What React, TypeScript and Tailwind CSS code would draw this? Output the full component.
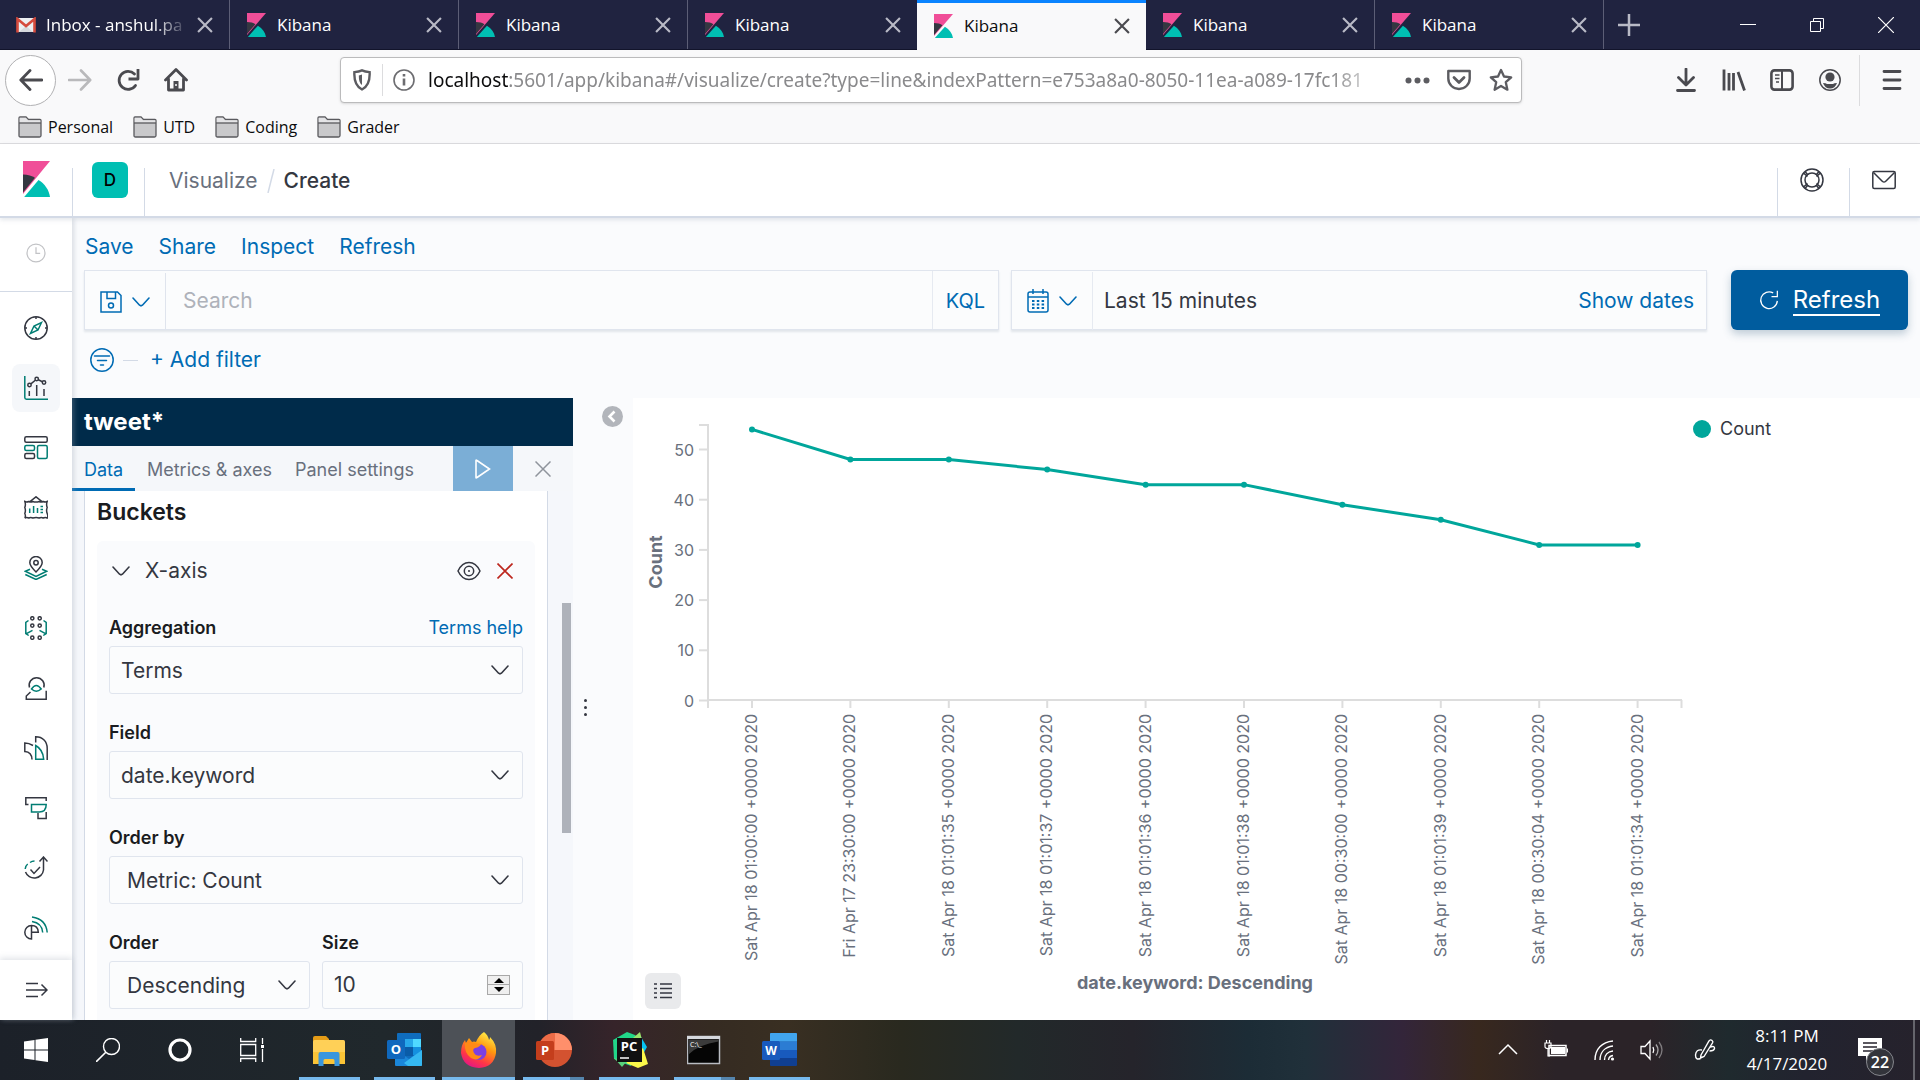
import React from "react";

type IconProps = { children: React.ReactNode; size?: string; box?: string; className?: string };

function Icon({ children, size = "size-6", box = "0 0 24 24", className = "" }: IconProps) {
  return (
    <svg
      viewBox={box}
      className={`${size} ${className} shrink-0`}
      fill="none"
      stroke="currentColor"
      strokeWidth="1.5"
      aria-hidden="true"
    >
      {children}
    </svg>
  );
}

const TEAL = "#017d73";

function KibanaMark({ className }: { className: string }) {
  return (
    <svg viewBox="0 0 27 36" className={`${className} shrink-0`} preserveAspectRatio="none" aria-hidden="true">
      <path d="M0 0h27L0 33z" fill="#f04e98" />
      <path d="M0 13.500c4.800 0 9.200 1.300 12 3.200L0 31.500z" fill="#343741" />
      <path d="M15.500 19C22 23 26 29 27 36H1.200z" fill="#00bfb3" />
    </svg>
  );
}

function GmailMark() {
  return (
    <svg viewBox="0 0 20 16" className="h-4 w-5 shrink-0" aria-hidden="true">
      <path d="M1 1h18v14H1z" fill="#eceff1" />
      <path d="M3 15l7-6 7 6z" fill="#d5d8dc" />
      <path d="M1.500 15.500V2L10 9l8.500-7v13.500" fill="none" stroke="#d54b3d" strokeWidth="2.600" />
    </svg>
  );
}

function CloseX({ className = "" }: { className?: string }) {
  return (
    <svg viewBox="0 0 15 15" className={`size-4 ${className}`} stroke="currentColor" strokeWidth="2" aria-hidden="true">
      <path d="M1 1l13 13M14 1L1 14" />
    </svg>
  );
}

function Chevron({ className = "" }: { className?: string }) {
  return (
    <svg viewBox="0 0 18 10" className={`h-[10px] w-[18px] ${className}`} fill="none" stroke="currentColor" strokeWidth="1.600" strokeLinecap="round" strokeLinejoin="round" aria-hidden="true">
      <path d="M1 1l6.600 7.200q1.400 1.200 2.800 0L17 1" />
    </svg>
  );
}

function BrowserTabs() {
  const tabs = ["Kibana", "Kibana", "Kibana", "Kibana", "Kibana", "Kibana"];
  return (
    <div className="flex h-[50px] shrink-0 border-b border-[#12142b] bg-[#202340] text-[17px] text-white">
      <div className="flex h-[49px] min-w-0 max-w-[230px] flex-1 items-center border-r border-[#5c5e76] pl-4 pr-4 pt-px">
        <GmailMark />
        <button className="ml-[10px] min-w-0 flex-1 overflow-hidden whitespace-nowrap text-left [mask-image:linear-gradient(to_right,black_75%,transparent)]">
          Inbox - anshul.pa
        </button>
        <button aria-label="Close tab" className="ml-2 text-[#b9bac6]">
          <CloseX />
        </button>
      </div>
      {tabs.map((t, i) => {
        const active = i === 3;
        return (
          <div
            key={i}
            className={
              active
                ? "flex h-[50px] min-w-0 max-w-[229px] flex-1 items-center border-t-[3px] border-[#0a84ff] bg-[#f9f9fa] pb-[2px] pl-[17px] pr-4 text-[#0c0c0d]"
                : i === 2
                  ? "flex h-[49px] min-w-0 max-w-[229px] flex-1 items-center pl-[17px] pr-4 pt-px"
                  : "flex h-[49px] min-w-0 max-w-[229px] flex-1 items-center border-r border-[#5c5e76] pl-[17px] pr-4 pt-px"
            }
          >
            <KibanaMark className="h-6 w-[19px]" />
            <button className="ml-[11px] min-w-0 flex-1 truncate text-left">{t}</button>
            <button aria-label="Close tab" className={active ? "text-[#4a4a4f]" : "text-[#b9bac6]"}>
              <CloseX />
            </button>
          </div>
        );
      })}
      <button aria-label="New tab" className="ml-[14px] flex items-center text-[#b9bac6]">
        <svg viewBox="0 0 22 22" className="size-[22px]" stroke="currentColor" strokeWidth="2.500" aria-hidden="true">
          <path d="M11 0v22M0 11h22" />
        </svg>
      </button>
      <div className="ml-auto flex items-center gap-[53px] pr-[26px]">
        <button aria-label="Minimize">
          <svg viewBox="0 0 16 16" className="size-4" stroke="white" aria-hidden="true"><path d="M0 7.500h16" /></svg>
        </button>
        <button aria-label="Restore">
          <svg viewBox="0 0 16 16" className="size-4" stroke="white" fill="none" aria-hidden="true"><path d="M1.500 4.500h10v10h-10zM4.500 4.500v-3h10v10h-3" /></svg>
        </button>
        <button aria-label="Close window">
          <svg viewBox="0 0 16 16" className="size-4" stroke="white" strokeWidth="1.200" aria-hidden="true"><path d="M0 0l16 16M16 0L0 16" /></svg>
        </button>
      </div>
    </div>
  );
}

function BrowserNav() {
  return (
    <div className="flex h-[60px] shrink-0 items-center pl-[5px] pr-4 text-[#4a4a4f]">
      <button aria-label="Back" className="flex size-[51px] items-center justify-center rounded-full border border-[#b1b1b3] bg-white">
        <Icon><path d="M23 12H2M11 2.500L1.800 12l9.200 9.500" strokeWidth="2.800" strokeLinecap="round" strokeLinejoin="round" /></Icon>
      </button>
      <button aria-label="Forward" className="ml-3 text-[#b9b9bb]">
        <Icon><path d="M1 12h21M13 2.500l9.200 9.500-9.200 9.500" strokeWidth="2.600" strokeLinecap="round" strokeLinejoin="round" /></Icon>
      </button>
      <button aria-label="Reload" className="ml-6">
        <Icon>
          <path d="M19.500 17.500A9 9 0 1 1 18.500 6" strokeWidth="2.800" strokeLinecap="round" />
          <path d="M22 1v10H12.500" strokeWidth="2.800" strokeLinejoin="round" />
        </Icon>
      </button>
      <button aria-label="Home" className="ml-6">
        <Icon>
          <path d="M1.500 12L12 1.500 22.500 12M4.500 11v11h15V11" strokeWidth="2.800" strokeLinecap="round" strokeLinejoin="round" />
          <path d="M9.500 13h5v9h-5z" fill="currentColor" stroke="none" />
          <path d="M12 16v2" stroke="#fff" strokeWidth="1.500" />
        </Icon>
      </button>
      <div className="ml-[152px] flex h-[46px] min-w-0 max-w-[1182px] flex-1 items-center rounded border border-[#bbbbbc] bg-white pl-3 pr-2 shadow-sm">
        <button aria-label="Tracking protection" className="w-[18px]">
          <svg viewBox="0 0 18 22" className="h-[22px] w-[18px]" fill="none" stroke="#5c5c61" strokeWidth="2.400" aria-hidden="true">
            <path d="M9 1.300c2.500 1.200 5 1.600 7.600 1.800C17 10 16 17 9 20.500 2 17 1 10 1.400 3.100 4 2.900 6.500 2.500 9 1.300z" />
            <path d="M9 5.500c-1.200.500-2 .700-3.200.900C5.800 11 6.500 14 9 16z" fill="#5c5c61" stroke="none" />
          </svg>
        </button>
        <div className="ml-[11px] h-8 w-px bg-[#dcdcde]" />
        <button aria-label="Site information" className="ml-[10px]">
          <svg viewBox="0 0 22 22" className="size-[22px]" fill="none" stroke="#6c6c70" strokeWidth="1.600" aria-hidden="true">
            <circle cx="11" cy="11" r="10" />
            <path d="M11 9.500v7" strokeWidth="2.600" />
            <path d="M11 5v2.500" strokeWidth="2.600" />
          </svg>
        </button>
        <div role="textbox" aria-label="Address" className="ml-[13px] min-w-0 flex-1 overflow-hidden whitespace-nowrap font-[Noto_Sans,sans-serif] text-[19px] text-[#8a8a8c] [mask-image:linear-gradient(to_right,black_94%,transparent)]">
          <span className="text-[#0c0c0d]">localhost</span>:5601/app/kibana#/visualize/create?type=line&amp;indexPattern=e753a8a0-8050-11ea-a089-17fc181
        </div>
        <button aria-label="Page actions" className="ml-4">
          <svg viewBox="0 0 25 7" className="h-[7px] w-[25px]" fill="#5c5c61" aria-hidden="true"><circle cx="3.500" cy="3.500" r="3" /><circle cx="12.500" cy="3.500" r="3" /><circle cx="21.500" cy="3.500" r="3" /></svg>
        </button>
        <button aria-label="Save to Pocket" className="ml-[17px] text-[#5c5c61]">
          <Icon>
            <path d="M1.300 3h21.400v7.500c0 6-5 10.500-10.700 10.500S1.300 16.500 1.300 10.500z" strokeWidth="2.400" strokeLinejoin="round" />
            <path d="M7 9.500l5 5 5-5" strokeWidth="2.800" strokeLinecap="round" strokeLinejoin="round" />
          </Icon>
        </button>
        <button aria-label="Bookmark this page" className="ml-[18px] text-[#5c5c61]">
          <Icon><path d="M12 2l3 6.500 7.200.800-5.400 4.900 1.600 7.500L12 18l-6.400 3.700 1.600-7.500-5.400-4.900L9 8.500z" strokeWidth="2.300" strokeLinejoin="round" /></Icon>
        </button>
      </div>
      <div className="ml-auto flex items-center gap-6">
        <button aria-label="Downloads"><Icon><path d="M12 1v15M4.500 9.500L12 17l7.500-7.500M3.500 22.500h17" strokeWidth="2.800" strokeLinecap="round" strokeLinejoin="round" /></Icon></button>
        <button aria-label="Library"><Icon><path d="M2 1.500v21M7 5v17.500M11.500 5v17.500M16 4l6.500 18.500" strokeWidth="2.800" /></Icon></button>
        <button aria-label="Sidebars">
          <Icon>
            <rect x="1.400" y="2.400" width="21.200" height="19.200" rx="3" strokeWidth="2.600" />
            <path d="M12 3v18" strokeWidth="2" /><path d="M5 7h4.500M5 10.500h4.500M6 14h3" strokeWidth="1.500" />
          </Icon>
        </button>
        <button aria-label="Account">
          <Icon>
            <circle cx="12" cy="12" r="10.200" strokeWidth="1.500" />
            <circle cx="12" cy="9" r="4.600" fill="currentColor" stroke="none" />
            <path d="M5 15q3 0 4 1h6q1-1 4-1-2 5.500-7 5.500T5 15z" fill="currentColor" stroke="none" />
          </Icon>
        </button>
      </div>
      <div className="ml-[17px] h-[51px] w-px bg-[#dcdcde]" />
      <button aria-label="Open menu" className="ml-5"><Icon><path d="M4 3.500h16M4 12h16M4 20.500h16" strokeWidth="2.800" strokeLinecap="round" /></Icon></button>
    </div>
  );
}

function Bookmarks() {
  return (
    <div className="flex h-[34px] shrink-0 items-center gap-5 border-b border-[#dcdcde] pl-[18px] text-[16px] text-[#0c0c0d]">
      {["Personal", "UTD", "Coding", "Grader"].map((b) => (
        <a key={b} href="#" className="flex items-center gap-[6px]">
          <svg viewBox="0 0 24 22" className="h-[22px] w-6" fill="#c9c9cb" stroke="#5a5a5e" strokeWidth="1.300" aria-hidden="true">
            <path d="M1 19.500V2q0-1 1-1h6l2.500 2.500H22q1 0 1 1v15q0 1.500-1.500 1.500h-19Q1 21 1 19.500z" />
            <path d="M1.700 6.800h20.600V4.200H10L7.800 1.800H1.700z" fill="#e4e4e6" stroke="none" />
            <path d="M1 7h22" />
          </svg>
          {b}
        </a>
      ))}
    </div>
  );
}

function KibanaHeader() {
  return (
    <header className="z-10 flex h-[74px] shrink-0 border-b-2 border-[#d3dae6] bg-white font-[Inter,sans-serif] text-[21px] text-[#343741] shadow-[0_2px_4px_rgba(152,162,179,0.25)]">
      <a href="#" aria-label="Kibana home" className="flex w-[72px] justify-center pt-[17px]"><KibanaMark className="h-9 w-[27px]" /></a>
      <div className="mt-6 w-px bg-[#d3dae6]" />
      <div className="flex w-[71px] pl-[19px] pt-[18px]">
        <button className="size-9 rounded-md bg-[#00bfb3] pt-px text-[17px] font-medium text-black">D</button>
      </div>
      <div className="mt-6 w-px bg-[#d3dae6]" />
      <nav aria-label="Breadcrumb" className="flex h-[74px] items-center pl-6">
        <a href="#" className="text-[#69707d]">Visualize</a>
        <svg viewBox="0 0 8 24" className="mx-[9px] h-6 w-2" stroke="#d3dae6" strokeWidth="1.500" aria-hidden="true"><path d="M7 0L1 24" /></svg>
        <span className="font-medium">Create</span>
      </nav>
      <div className="ml-auto mt-6 w-px bg-[#d3dae6]" />
      <button aria-label="Help" className="flex w-[71px] justify-center pr-1 pt-6">
        <Icon>
          <circle cx="12" cy="12" r="11" /><circle cx="12" cy="12" r="7" />
          <path d="M3.500 5l4 3.500M5 3.500L8 7M20.500 5l-4 3.500M19 3.500L16 7M3.500 19l4-3.500M5 20.500L8 17M20.500 19l-4-3.500M19 20.500L16 17" />
        </Icon>
      </button>
      <div className="mt-6 w-px bg-[#d3dae6]" />
      <button aria-label="Newsfeed" className="flex w-[70px] justify-center pr-[2px] pt-6">
        <Icon><rect x="0.800" y="3.500" width="22.400" height="17" rx="1.500" /><path d="M1.500 4.500l9 9q1.500 1.200 3 0l9-9" /></Icon>
      </button>
    </header>
  );
}

const navIcons: { name: string; draw: React.ReactNode }[] = [
  {
    name: "Discover",
    draw: (<><circle cx="12" cy="12" r="11.200" /><path d="M12 1v2M12 21v2M1 12h2M21 12h2" /><path d="M17.500 6.500l-3.500 7.500-7.500 3.500L10 10zM10 10l4 4" stroke={TEAL} /></>),
  },
  {
    name: "Visualize",
    draw: (<><path d="M.800 0v21.500q0 1.700 1.700 1.700H24" stroke={TEAL} /><circle cx="5.500" cy="9" r="1.700" /><circle cx="12.700" cy="3" r="1.700" /><circle cx="20" cy="6.500" r="1.700" /><path d="M6.900 7.900l4.400-3.700M14.300 3.800l4.100 1.900M5.300 15v5M12.700 9v11M20 13v7" /></>),
  },
  {
    name: "Dashboard",
    draw: (<><rect x=".800" y=".800" width="22.400" height="5.500" rx="1.500" /><rect x=".800" y="9.500" width="9.700" height="5" rx="1.500" stroke={TEAL} /><rect x="13.500" y="9.500" width="9.700" height="13" rx="1.500" stroke={TEAL} /><rect x=".800" y="17.500" width="9.700" height="5" rx="1.500" /></>),
  },
  {
    name: "Canvas",
    draw: (<><path d="M6 5.500l6-4.700 6 4.700M.800 5.500q2 1.200 4 0 2 1.200 4 0 3 1.200 6.400 0 2 1.200 4 0 2 1.200 4 0-1.200 3 0 6-1.200 3 0 6t0 4.500q-2-1.200-4 0-2-1.200-4 0-3-1.200-6.400 0-2-1.200-4 0-2-1.200-4 0 1.200-2 0-4.500 1.200-3 0-6 1.200-3 0-6z" /><path d="M5.700 12.500V17M9.600 10v7M13.500 12v5M16.500 10.500H19M16.500 13.500H19M16.500 16.500H19" stroke={TEAL} /></>),
  },
  {
    name: "Maps",
    draw: (<><path d="M12 16C8 12 5.800 9.500 5.800 6.500a6.200 6 0 0 1 12.400 0C18.200 9.500 16 12 12 16z" /><circle cx="12" cy="6.800" r="2.200" /><path d="M6 13.200l-4.700 2L12 20.500l10.700-5.300-4.700-2M1.300 18.500L12 23.500l10.700-5" stroke={TEAL} /></>),
  },
  {
    name: "Machine Learning",
    draw: (<><circle cx="8.300" cy="2.300" r="1.600" /><circle cx="15.700" cy="2.300" r="1.600" /><circle cx="8.300" cy="9.600" r="1.600" /><circle cx="15.700" cy="9.600" r="1.600" /><circle cx="8.300" cy="21.700" r="1.600" /><circle cx="15.700" cy="21.700" r="1.600" /><path d="M4.500 4.500L1.800 6.500v11l2.900 2M19.500 4.500l2.700 2v11l-2.900 2M2 17.800l6.500-3.500M22 17.800l-6.500-3.500" stroke={TEAL} /></>),
  },
  {
    name: "Metrics",
    draw: (<><path d="M5.500 11.500A7.500 7.500 0 1 1 19.800 11.500M6.500 16l-4.200 4v3.200h19.900v-8.500" /><path d="M7.500 13q4.700-7 9.700 0-5 4.500-9.700 0z" stroke={TEAL} /></>),
  },
  {
    name: "Logs",
    draw: (<><path d="M9 9.500Q5 7 .800 7v8.500q7 .500 7.200 8M11.700 6.500V.800c7 0 11.500 4.500 11.500 11.500V24" /><path d="M11.700 9.500q7.300 4 8 13.700h-8z" stroke={TEAL} /></>),
  },
  {
    name: "APM",
    draw: (<><path d="M4.500 8.500H1.800V1.800h20.400V5M14 17v5.500h8.200V16" /><path d="M7.500 8.500h14.700q0 7.500-7 7.500H7.500z" stroke={TEAL} /></>),
  },
  {
    name: "Uptime",
    draw: (<><path d="M1.500 16a9.300 9 0 0 0 18-2V1M15.500 5.500l4-4.500 4 4.500M6.500 13.500l3.500 4 6-6.500" /><path d="M1.200 13q.500-3.500 2.500-5M6 6.500Q8 5 10.500 5" stroke={TEAL} /></>),
  },
  {
    name: "SIEM",
    draw: (<><path d="M7.500 9.500a6.700 6.700 0 1 0 0 13.400V9.500q6.500 0 6.800 6.700H7.500" /><path d="M8 1q14 2 15.200 15.500M8 5.500q10 1.500 10.700 11" stroke={TEAL} /></>),
  },
];

function SideNav() {
  return (
    <nav aria-label="Main" className="z-[5] flex w-[72px] shrink-0 flex-col bg-white text-[#343741] shadow-[2px_0_5px_rgba(152,162,179,0.35)]">
      <button aria-label="Recently viewed" className="flex h-[74px] shrink-0 items-center justify-center border-b border-[#d3dae6] pb-[3px] pr-px text-[#c2c3c6]">
        <Icon size="size-5"><circle cx="12" cy="12" r="10.800" /><path d="M12 5v7.500h5" /></Icon>
      </button>
      <ul className="mt-3 flex min-h-0 flex-1 flex-col gap-3 overflow-hidden">
        {navIcons.map((n) => (
          <li key={n.name} className="flex justify-center">
            <a href="#" aria-label={n.name} className={n.name === "Visualize" ? "flex size-12 items-center justify-center rounded-lg bg-[#f5f7fa]" : "flex size-12 items-center justify-center"}>
              <Icon>{n.draw}</Icon>
            </a>
          </li>
        ))}
      </ul>
      <button aria-label="Expand" className="flex h-[60px] shrink-0 items-center justify-center shadow-[0_-2px_6px_rgba(152,162,179,0.3)]">
        <Icon><path d="M2 5.500h12M2 12h21M2 18.500h12M17.500 6.500L23 12l-5.500 5.500" /></Icon>
      </button>
    </nav>
  );
}

function QueryBar() {
  return (
    <div className="flex h-[60px] text-[21px]">
      <div className="flex min-w-0 flex-1 border border-[#e0e5ee] bg-[#fbfcfd] shadow-[0_2px_2px_rgba(152,162,179,0.25)]">
        <button aria-label="Saved queries" className="flex w-20 items-center justify-center gap-[10px] pt-[3px] text-[#006bb4]">
          <svg viewBox="0 0 22 22" className="size-[22px]" fill="none" stroke="currentColor" strokeWidth="1.500" aria-hidden="true">
            <path d="M1 1h16.500L21 4.500V21H1zM7 1v6.500h8.500V1" /><circle cx="11" cy="14.500" r="2.500" />
          </svg>
          <Chevron />
        </button>
        <div className="mt-[2px] w-px bg-[#dfe4ed]" />
        <input aria-label="Search" placeholder="Search" className="min-w-0 flex-1 bg-transparent pl-[17px] pr-4 pt-px outline-none placeholder:text-[#aeb2ba]" />
        <div className="w-px bg-[#e6eaf1]" />
        <button className="w-[65px] pt-px text-[20px] text-[#006bb4]">KQL</button>
      </div>
      <div className="ml-3 flex min-w-0 flex-[0_1_696px] items-center border border-[#e0e5ee] bg-[#fbfcfd] shadow-[0_2px_2px_rgba(152,162,179,0.25)]">
        <button aria-label="Quick date select" className="flex h-full w-20 items-center justify-center gap-[10px] pt-px text-[#006bb4]">
          <svg viewBox="0 0 22 24" className="h-6 w-[22px]" fill="none" stroke="currentColor" strokeWidth="1.500" aria-hidden="true">
            <rect x="1" y="3" width="20" height="20" rx="2" /><path d="M1 8h20M6 0v5M16 0v5" />
            <path d="M5 12h12.500M5 15.500h12.500M5 19h12.500" strokeWidth="2" strokeDasharray="2.500 2.300" />
          </svg>
          <Chevron />
        </button>
        <div className="mt-[2px] h-full w-px bg-[#e6eaf1]" />
        <button className="flex-1 pl-[11px] pt-px text-left">Last 15 minutes</button>
        <button className="pr-3 pt-px text-[#006bb4]">Show dates</button>
      </div>
      <button className="ml-6 flex w-[177px] items-center justify-center gap-[14px] rounded-md bg-[#005c9e] text-[24px] text-white shadow-[0_4px_8px_rgba(54,97,126,0.3)]">
        <Icon size="size-5"><path d="M22 13a10 10 0 1 1-5-9.500M22 1v7h-7" /></Icon>
        <span className="mt-px border-b-2 border-white leading-7">Refresh</span>
      </button>
    </div>
  );
}

function SelectField({ id, label, value, indent = false, help }: { id: string; label: string; value: string; indent?: boolean; help?: string }) {
  return (
    <div className="min-w-0 flex-1">
      <div className="flex h-6 items-center justify-between text-[18px]">
        <label htmlFor={id} className="font-semibold text-[#1a1c21]">{label}</label>
        {help && <a href="#" className="text-[#006bb4]">{help}</a>}
      </div>
      <div className="relative mt-[7px]">
        <select id={id} className={indent ? "h-12 w-full appearance-none rounded-[3px] border border-[#e0e5ee] bg-[#fbfcfd] pl-[17px] pt-px text-[21px] outline-none" : "h-12 w-full appearance-none rounded-[3px] border border-[#e0e5ee] bg-[#fbfcfd] pl-[11px] pt-px text-[21px] outline-none"}>
          <option>{value}</option>
        </select>
        <Chevron className="pointer-events-none absolute right-[14px] top-[19px]" />
      </div>
    </div>
  );
}

function Editor() {
  return (
    <section className="flex w-[501px] shrink-0 flex-col bg-[#f5f7fb]">
      <h1 className="flex h-12 shrink-0 items-center bg-[#002b4a] pl-3 text-[24px] font-bold text-white">tweet*</h1>
      <div className="flex h-[45px] shrink-0 bg-[#f5f7fa] text-[18px] text-[#69707d]">
        <div role="tablist" className="flex">
          <button role="tab" aria-selected="true" className="w-[63px] border-b-[3px] border-[#006bb4] pt-[5px] text-[#006bb4]">Data</button>
          <button role="tab" aria-selected="false" className="w-[149px] pt-[2px]">Metrics &amp; axes</button>
          <button role="tab" aria-selected="false" className="w-[141px] pt-[2px]">Panel settings</button>
        </div>
        <button aria-label="Apply changes" className="ml-auto flex w-[60px] items-center justify-center bg-[#7baed6] text-white">
          <svg viewBox="0 0 16 20" className="h-5 w-4" fill="none" stroke="currentColor" strokeWidth="1.600" aria-hidden="true"><path d="M1 1.500q0-.800 1 0L14.500 10 2 18.500q-1 .800-1 0z" /></svg>
        </button>
        <button aria-label="Discard changes" className="flex w-[60px] items-center justify-center text-[#8f949c]">
          <svg viewBox="0 0 16 16" className="size-4" stroke="currentColor" strokeWidth="1.500" aria-hidden="true"><path d="M.500.500l15 15M15.500.500l-15 15" /></svg>
        </button>
      </div>
      <div className="flex min-h-0 flex-1 overflow-hidden pl-3">
        <div className="h-[640px] w-[464px] border-x border-[#d3dae6] bg-white px-3 pt-[9px]">
          <h2 className="text-[23px] font-semibold leading-6 text-[#1a1c21]">Buckets</h2>
          <div className="mt-[17px] h-full rounded-md bg-[#fafbfd] px-3">
            <div className="flex h-[60px] items-center pl-[3px] pr-[10px]">
              <button aria-expanded="true" className="flex items-center gap-[15px] text-[21px]"><Chevron />X-axis</button>
              <button aria-label="Disable aggregation" className="ml-auto">
                <Icon><path d="M1 12q4-8.500 11-8.500T23 12q-4 8.500-11 8.500T1 12z" /><circle cx="12" cy="12" r="4.700" /><circle cx="12" cy="12" r="1" fill="currentColor" stroke="none" /></Icon>
              </button>
              <button aria-label="Remove aggregation" className="ml-4 text-[#bd271e]">
                <svg viewBox="0 0 16 16" className="size-4" stroke="currentColor" strokeWidth="1.600" aria-hidden="true"><path d="M.500.500l15 15M15.500.500l-15 15" /></svg>
              </button>
            </div>
            <div className="flex flex-col gap-[26px] pt-[14px]">
              <SelectField id="aggregation" label="Aggregation" value="Terms" help="Terms help" />
              <SelectField id="field" label="Field" value="date.keyword" />
              <SelectField id="order-by" label="Order by" value="Metric: Count" indent />
              <div className="flex gap-3">
                <SelectField id="order" label="Order" value="Descending" indent />
                <div className="min-w-0 flex-1">
                  <label htmlFor="size" className="flex h-6 items-center text-[18px] font-semibold text-[#1a1c21]">Size</label>
                  <div className="mt-[7px] flex h-12 items-center rounded-[3px] border border-[#e0e5ee] bg-[#fbfcfd] pl-[11px] pr-3">
                    <input id="size" type="number" defaultValue={10} className="w-0 flex-1 appearance-none bg-transparent text-[21px] outline-none [-moz-appearance:textfield] [&::-webkit-inner-spin-button]:appearance-none" />
                    <div className="flex w-[23px] flex-col border border-[#a8a8a8] bg-[#efefef]">
                      <button aria-label="Increase size" className="flex h-[9px] items-center justify-center border-b border-[#a8a8a8]"><svg viewBox="0 0 10 5" className="h-[5px] w-[10px]" aria-hidden="true"><path d="M0 5L5 0l5 5z" /></svg></button>
                      <button aria-label="Decrease size" className="flex h-[9px] items-center justify-center"><svg viewBox="0 0 10 5" className="h-[5px] w-[10px]" aria-hidden="true"><path d="M0 0l5 5 5-5z" /></svg></button>
                    </div>
                  </div>
                </div>
              </div>
            </div>
          </div>
        </div>
        <div className="ml-[14px] mt-28 h-[230px] w-[9px] bg-[#aeb2ba]" />
      </div>
    </section>
  );
}

const points: [string, number][] = [
  ["Sat Apr 18 01:00:00 +0000 2020", 54],
  ["Fri Apr 17 23:30:00 +0000 2020", 48],
  ["Sat Apr 18 01:01:35 +0000 2020", 48],
  ["Sat Apr 18 01:01:37 +0000 2020", 46],
  ["Sat Apr 18 01:01:36 +0000 2020", 43],
  ["Sat Apr 18 01:01:38 +0000 2020", 43],
  ["Sat Apr 18 00:30:00 +0000 2020", 39],
  ["Sat Apr 18 01:01:39 +0000 2020", 36],
  ["Sat Apr 18 00:30:04 +0000 2020", 31],
  ["Sat Apr 18 01:01:34 +0000 2020", 31],
];

const px = (i: number) => 119 + i * 98.4;
const py = (v: number) => 302.5 - v * 5.02;

function Chart() {
  return (
    <section className="flex min-w-0 flex-1 items-start bg-white">
      <div className="relative h-full min-w-0 flex-1">
        <svg viewBox="0 0 1057 622" className="w-full" role="img" aria-label="Count by date.keyword">
          <g stroke="#ddd" strokeWidth="2">
            <path d="M75 26V310M75 302H1049M66 27H75M1048.500 302v8" fill="none" />
            {[0, 10, 20, 30, 40, 50].map((v) => <path key={v} d={`M66 ${py(v)}h9`} />)}
            {points.map((p, i) => <path key={p[0]} d={`M${px(i)} 303v7`} />)}
          </g>
          <g fontSize="16" fill="#69707d" textAnchor="end">
            {[0, 10, 20, 30, 40, 50].map((v) => <text key={v} x="61" y={py(v) + 6}>{v}</text>)}
            {points.map((p, i) => (
              <text key={p[0]} transform={`translate(${px(i) + 5} 316) rotate(-90)`}>{p[0]}</text>
            ))}
          </g>
          <g fill="#69707d" fontWeight="700" textAnchor="middle" fontSize="18">
            <text transform="translate(29 164) rotate(-90)">Count</text>
            <text x="562" y="591">date.keyword: Descending</text>
          </g>
          <polyline points={points.map((p, i) => `${px(i)},${py(p[1])}`).join(" ")} fill="none" stroke="#00a69b" strokeWidth="3" />
          {points.map((p, i) => <circle key={p[0]} cx={px(i)} cy={py(p[1])} r="3" fill="#00a69b" />)}
        </svg>
        <button aria-label="Toggle legend" className="absolute bottom-[11px] left-3 flex size-9 items-center justify-center rounded-md bg-[#e9eaec]">
          <svg viewBox="0 0 18 18" className="size-[18px]" stroke="#343741" strokeWidth="1.500" aria-hidden="true"><path d="M0 2h3M6 2h12M0 6.500h3M6 6.500h12M0 11h3M6 11h12M0 15.500h3M6 15.500h12" /></svg>
        </button>
      </div>
      <div className="flex w-[230px] shrink-0 items-center gap-[9px] pl-[3px] pt-[19px] text-[18px] leading-6">
        <span className="size-[18px] rounded-full bg-[#00a69b]" />
        Count
      </div>
    </section>
  );
}

function Visualize() {
  return (
    <main className="flex min-w-0 flex-1 flex-col">
      <nav aria-label="Visualization actions" className="flex h-[52px] shrink-0 items-center gap-[25px] pl-[13px] pt-[6px] text-[21px] text-[#006bb4]">
        {["Save", "Share", "Inspect", "Refresh"].map((a) => <button key={a}>{a}</button>)}
      </nav>
      <div className="shrink-0 pl-3 pr-3"><QueryBar /></div>
      <div className="flex h-[60px] shrink-0 items-center pl-[18px] text-[21px] text-[#006bb4]">
        <button aria-label="Filter options"><Icon><circle cx="12" cy="12" r="11.200" /><path d="M4.500 8h15M7.500 12.500h9M10.500 17h3" strokeLinecap="round" /></Icon></button>
        <span className="ml-[9px] h-px w-[15px] bg-[#d3dae6]" />
        <button className="ml-3">+ Add filter</button>
      </div>
      <div className="mt-2 flex min-h-0 flex-1">
        <Editor />
        <div className="flex w-[60px] shrink-0 flex-col">
          <button aria-label="Collapse editor" className="mr-[10px] mt-2 self-end">
            <svg viewBox="0 0 21 21" className="size-[21px]" aria-hidden="true"><circle cx="10.500" cy="10.500" r="10.500" fill="#b2b5bb" /><path d="M12.500 5.500l-5 5 5 5" fill="none" stroke="white" strokeWidth="2.600" /></svg>
          </button>
          <div role="separator" aria-label="Resize panels" className="ml-[11px] mt-[272px] flex flex-col gap-1">
            {[0, 1, 2].map((d) => <span key={d} className="size-[3px] rounded-full bg-[#343741]" />)}
          </div>
        </div>
        <Chart />
      </div>
    </main>
  );
}

const apps: { name: string; bar: string; width: string; draw: React.ReactNode }[] = [
  {
    name: "File Explorer", bar: "w-[61px]", width: "w-[75px]",
    draw: (<><path d="M2 6q0-2 2-2h11l3 3v4H2z" fill="#e59c17" /><rect x="2" y="8" width="32" height="24" rx="1.500" fill="#ffd057" /><path d="M2 20h32v12H2z" fill="#fbc436" /><path d="M7.500 34V22q0-2 2-2h17q2 0 2 2v12h-5v-5.500q0-1.500-1.500-1.500h-8q-1.500 0-1.500 1.500V34z" fill="#3a96dd" /></>),
  },
  {
    name: "Outlook", bar: "w-[61px]", width: "w-[75px]",
    draw: (<><rect x="11" y="1" width="24" height="26" rx="1" fill="#0f6cbd" /><path d="M19 7h8v8h-8z" fill="#28a8ea" /><path d="M27 7h8v8h-8z" fill="#50d9ff" /><path d="M19 15h8v9h-8z" fill="#0a5ca8" /><path d="M27 15h8v8h-8z" fill="#1490df" /><path d="M9 17l14 10L36 18v15q0 1-1 1H10q-1 0-1-1z" fill="#1a86d9" /><path d="M36 18v15q0 1-1 1H22l-4-3z" fill="#35b8f1" /><rect x="1" y="8" width="18" height="19" rx="1.500" fill="#0f68bd" /><text x="10" y="22" fontSize="13" fontWeight="700" fill="white" textAnchor="middle">O</text></>),
  },
  {
    name: "Firefox", bar: "w-[73px]", width: "w-[73px]",
    draw: (<><defs><linearGradient id="ff" x1="0.800" y1="0" x2="0.300" y2="1"><stop offset="0" stopColor="#fff44f" /><stop offset="0.400" stopColor="#ff980e" /><stop offset="0.750" stopColor="#ff3647" /><stop offset="1" stopColor="#e31587" /></linearGradient></defs><path d="M24 0q4 3 5 8 1-1 1-3 7 7 6 16-2 14-17 15Q3 35 1 21 1 13 5 8l1 3 3-5 3 4q2-1 4 0 3-7 8-10z" fill="url(#ff)" /><circle cx="18.500" cy="20" r="8" fill="#7b3fe4" /><path d="M5 11q5-2 9 0 3 1 7 1-1 3-6 4-3 1-1 5 2 4 8 2-4 7-11 3Q4 21 5 11z" fill="#ff8a16" /></>),
  },
  {
    name: "PowerPoint", bar: "w-[61px]", width: "w-[77px]",
    draw: (<><circle cx="20" cy="18" r="17" fill="#d35230" /><path d="M20 1a17 17 0 0 1 17 17H20z" fill="#ff8f6b" /><path d="M20 1a17 17 0 0 0-17 17h17z" fill="#ed6c47" /><rect x="1" y="9" width="18" height="19" rx="1.500" fill="#c43e1c" /><text x="10" y="23" fontSize="13" fontWeight="700" fill="white" textAnchor="middle">P</text></>),
  },
  {
    name: "PyCharm", bar: "w-[61px]", width: "w-[75px]",
    draw: (<><path d="M2 8L16 0l8 3 5 5L20 34l-8-3-9-4z" fill="#21d789" /><path d="M22 7l8-2 6 10-5 9z" fill="#07c3f2" /><path d="M22 6l7-6 2 8z" fill="#9be36b" /><path d="M32 16l5 16-10 4-12-5z" fill="#fcf84a" /><path d="M3 26l8 9 5-6z" fill="#5ad27c" /><rect x="6" y="6" width="25" height="24" fill="#111" /><text x="18" y="19" fontSize="13" fontWeight="700" fill="white" textAnchor="middle">PC</text><path d="M9 26h9" stroke="white" strokeWidth="1.500" /></>),
  },
  {
    name: "Command Prompt", bar: "w-[61px]", width: "w-[75px]",
    draw: (<><rect x="1.500" y="4.500" width="32" height="27" fill="#050505" stroke="#b9bcc2" strokeWidth="1.500" /><path d="M1 4h33v3H1z" fill="#d5d8dd" /><path d="M2.500 7.500h30v2q-20 3-30 13z" fill="#3b3b3b" /><text x="4" y="15" fontSize="7" fill="white">C:\_</text></>),
  },
  {
    name: "Word", bar: "w-[61px]", width: "w-[75px]",
    draw: (<><rect x="9" y="1" width="27" height="33" rx="1" fill="#103f91" /><path d="M9 18h27v8H9z" fill="#185abd" /><path d="M9 9.500h27V18H9z" fill="#2b7cd3" /><path d="M9 2q0-1 1-1h25q1 0 1 1v7.500H9z" fill="#41a5ee" /><rect x="1" y="9" width="18" height="19" rx="1.500" fill="#185abd" /><text x="10" y="23" fontSize="12" fontWeight="700" fill="white" textAnchor="middle">W</text></>),
  },
];

function Taskbar() {
  return (
    <footer className="flex h-[60px] shrink-0 text-white [background:linear-gradient(90deg,#1c2129_0%,#20282c_20%,#222229_28%,#36242a_32%,#352b22_37%,#392f22_41%,#29291f_47%,#22292a_53%,#25242b_59%,#1c2c36_65%,#20303a_68%,#33253a_73%,#38281e_77%,#2b2328_81%,#2b2328_86%,#1f2a2e_90%,#22232f_94%,#26222c_100%)]">
      <button aria-label="Start" className="flex w-[72px] items-center justify-center">
        <Icon><path d="M0 3.500L10.500 2v9.500H0zM11.500 1.800L24 0v11.500H11.500zM0 12.500h10.500V22L0 20.500zM11.500 12.500H24V24l-12.500-1.800z" fill="white" stroke="none" /></Icon>
      </button>
      <button aria-label="Search Windows" className="flex w-[72px] items-center justify-center">
        <Icon><circle cx="15.500" cy="8.500" r="8" strokeWidth="1.400" /><path d="M9.800 14.200L0 24" strokeWidth="1.600" /></Icon>
      </button>
      <button aria-label="Cortana" className="flex w-[72px] items-center justify-center">
        <Icon><circle cx="12" cy="12" r="10" strokeWidth="3.200" /></Icon>
      </button>
      <button aria-label="Task View" className="flex w-[72px] items-center justify-center">
        <Icon><path d="M.700 0v3.500h15V0M.700 6.500h15v11h-15zM.700 24v-3.500h15V24M22.500 0v6M22.500 11v13" strokeWidth="1.300" /><path d="M21 7h3v3h-3z" fill="white" stroke="none" /></Icon>
      </button>
      <div className="ml-1 flex">
        {apps.map((a) => (
          <button key={a.name} aria-label={a.name} className={`flex flex-col items-center pt-3 ${a.width} ${a.name === "Firefox" ? "bg-[#4d5157]" : ""}`}>
            <svg viewBox="1 0 36 36" className="size-9 font-[Open_Sans,sans-serif]" aria-hidden="true">{a.draw}</svg>
            <span className={`mt-auto flex h-[3px] justify-end bg-[#76b9ed] ${a.bar}`}>
              {(a.name === "PowerPoint" || a.name === "Command Prompt") && <span className="w-[14px] bg-[#5585ad]" />}
            </span>
          </button>
        ))}
      </div>
      <div className="ml-auto flex items-center">
        <button aria-label="Show hidden icons"><Icon size="h-6 w-5" box="0 0 20 24"><path d="M1 16l9-9 9 9" /></Icon></button>
        <button aria-label="Battery" className="ml-[26px]"><Icon><path d="M5 7.500h17v10H5z" /><path d="M7 9h14v7H7z" fill="white" stroke="none" /><path d="M23.500 10.500v4M1 5h6v3.500q0 2-3 2t-3-2zM2.500 2v3M5.500 2v3M4 10.500V18h2" strokeWidth="1.200" /></Icon></button>
        <button aria-label="Network" className="ml-6"><Icon><path d="M3 22C3 11 10 4 21 3M8 22c0-8 5-13 13-14M12.500 22c0-5 3.500-8.500 8.500-9" strokeWidth="1.400" /><path d="M16.500 22q.500-4 4.500-4.500" strokeWidth="1.400" /><circle cx="20.500" cy="21" r="1.600" fill="white" stroke="none" /></Icon></button>
        <button aria-label="Volume" className="ml-6"><Icon><path d="M1 8.500h4L10 3v18l-5-5.500H1zM13 9q1.500 3 0 6" strokeWidth="1.300" /><path d="M16 6.500q4 5.500 0 11" strokeWidth="1.300" opacity=".6" /><path d="M19 4q6 8 0 16" strokeWidth="1.300" opacity=".4" /></Icon></button>
        <button aria-label="Windows Ink" className="ml-[29px]"><Icon><path d="M8 17L16 3q1.500-2 3-.500T19.500 5L11 18.500 7.500 20zM9 12q-6-1-6.500 5 0 5.500 5 3.500M17 9q5-1.500 4.500 1.500-.500 2.500-5 2.500" strokeWidth="1.400" /></Icon></button>
        <div className="ml-[22px] flex w-[96px] flex-col items-center text-[17px] leading-7">
          <span>8:11 PM</span>
          <span>4/17/2020</span>
        </div>
        <button aria-label="22 notifications" className="relative ml-[23px] mr-[31px]">
          <Icon><path d="M0 0h24v18H13l-5 5v-5H0z" fill="white" stroke="none" /><path d="M5 5h14M5 9h14M5 13h14" stroke="#26222c" /></Icon>
          <span className="absolute left-2 top-[10px] flex h-7 w-7 items-center justify-center rounded-full border border-[#85868c] bg-[#33343b] text-[16px] font-semibold">22</span>
        </button>
        <span className="mr-[5px] h-[60px] w-[2px] bg-[#65656c]" />
      </div>
    </footer>
  );
}

export default function App() {
  return (
    <div className="flex h-screen flex-col overflow-hidden bg-[#f9f9fa] font-[Open_Sans,Noto_Sans,sans-serif]">
      <BrowserTabs />
      <BrowserNav />
      <Bookmarks />
      <KibanaHeader />
      <div className="flex min-h-0 flex-1 bg-[#fafbfd] font-[Inter,sans-serif] text-[#343741]">
        <SideNav />
        <Visualize />
      </div>
      <Taskbar />
    </div>
  );
}
